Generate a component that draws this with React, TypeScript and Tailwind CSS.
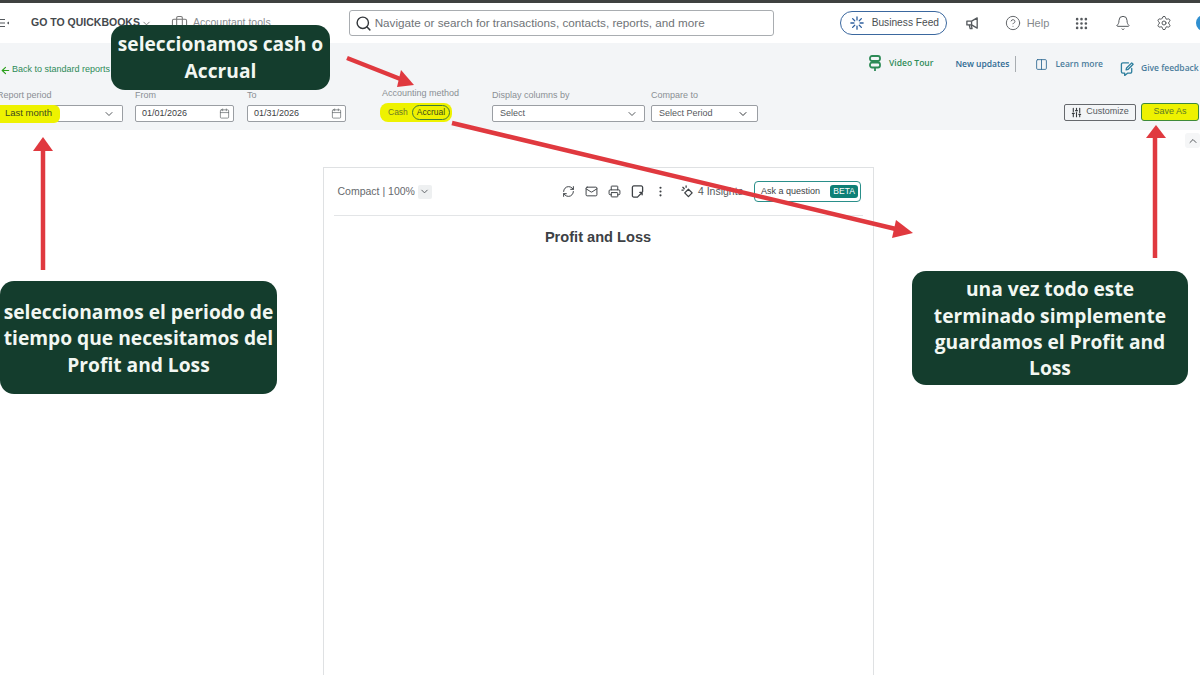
import {
  Bell,
  Briefcase,
  Calendar,
  ChevronDown,
  ChevronUp,
  CircleHelp,
  Columns2,
  Grip,
  Mail,
  MoreVertical,
  Printer,
  RefreshCw,
  Search,
  Settings,
  SlidersVertical,
  ArrowLeft,
} from 'lucide-react'

function FeedIcon() {
  return (
    <svg viewBox="0 0 16 16" className="h-[14px] w-[14px] text-[#2e5f9e]" fill="none" stroke="currentColor" strokeWidth="1.5" strokeLinecap="round">
      <path d="M8 1v3.5M8 11.5V15M1 8h3.5M11.5 8H15M3 3l2.4 2.4M10.6 10.6 13 13M13 3l-2.4 2.4M5.4 10.6 3 13" />
    </svg>
  )
}

function MenuIcon() {
  return (
    <svg viewBox="0 0 10 10" className="h-[10px] w-[10px] text-[#55595d]" fill="none" stroke="currentColor" strokeWidth="1.2">
      <path d="M-1 1.5h6M-1 5h6M-1 8.5h6" />
      <path d="M9 3.4v3.2L6.8 5z" fill="currentColor" stroke="none" />
    </svg>
  )
}

function MegaphoneIcon() {
  return (
    <svg viewBox="0 0 16 16" className="h-[15px] w-[15px] text-[#55595d]" fill="none" stroke="currentColor" strokeWidth="1.4" strokeLinejoin="round">
      <path d="M2 5.5h5L13 2v11L7 9.5H2z" />
      <path d="M7 5.5v4M4.5 9.5l1 4h2l-.8-4" />
    </svg>
  )
}

function SignpostIcon() {
  return (
    <svg viewBox="0 0 14 16" className="h-[16px] w-[14px] text-[#2e8b57]" fill="none" stroke="currentColor" strokeWidth="1.8" strokeLinejoin="round">
      <rect x="2" y="1" width="10" height="5" rx="2" />
      <rect x="2" y="7.5" width="10" height="5" rx="2" />
      <path d="M7 12.5V16" />
    </svg>
  )
}

function FeedbackIcon() {
  return (
    <svg viewBox="0 0 16 16" className="h-[15px] w-[15px] text-[#2e7f9e]" fill="none" stroke="currentColor" strokeWidth="1.4" strokeLinecap="round" strokeLinejoin="round">
      <path d="M9 2H3a1.5 1.5 0 0 0-1.5 1.5v8A1.5 1.5 0 0 0 3 13h2v2.5L8 13h3a1.5 1.5 0 0 0 1.5-1.5V8" />
      <path d="M6.5 9.5 7 7.5 12.5 2l1.5 1.5L8.5 9z" />
    </svg>
  )
}

function ExportIcon() {
  return (
    <svg viewBox="0 0 14 14" className="h-[13px] w-[13px] text-[#3d4145]" fill="none" stroke="currentColor" strokeWidth="1.4" strokeLinecap="round" strokeLinejoin="round">
      <path d="M7 13H3a1.5 1.5 0 0 1-1.5-1.5v-9A1.5 1.5 0 0 1 3 1h8a1.5 1.5 0 0 1 1.5 1.5V7" />
      <path d="M7.5 12.5 12 8M9.5 8H12v2.5" />
    </svg>
  )
}

function InsightIcon() {
  return (
    <svg viewBox="0 0 14 14" className="h-[13px] w-[13px] text-[#3d4145]" fill="none" stroke="currentColor" strokeWidth="1.4" strokeLinejoin="round">
      <path d="M8 4.5 12 8.5 8 12.5 4 8.5z" />
      <path d="M2 2.5 3.5 4M5.5 1v1.5M1 5.5h1.5" strokeLinecap="round" />
    </svg>
  )
}

function Field({ label, children, className, labelClass = '' }: { label: string; children: React.ReactNode; className: string; labelClass?: string }) {
  return (
    <div className={className}>
      <div className={`mb-[4px] whitespace-nowrap text-[9px] leading-[12px] text-[#8a8f94] ${labelClass}`}>{label}</div>
      {children}
    </div>
  )
}

function DateBox({ value }: { value: string }) {
  return (
    <div className="flex h-[17px] items-center justify-between rounded-[2px] border border-[#9a9ea3] bg-white pl-[6px] pr-[3px] text-[9px] text-[#3d4145]">
      <span>{value}</span>
      <Calendar className="h-[11px] w-[11px] text-[#5f6468]" strokeWidth={1.5} />
    </div>
  )
}

function Callout({ className, children }: { className: string; children: React.ReactNode }) {
  return (
    <div className={`absolute flex items-center justify-center rounded-[14px] bg-[#143d2d] text-center font-['Open_Sans',sans-serif] text-[19.2px] font-bold leading-[26.3px] text-[#f2f7f2] ${className}`}>
      <div>{children}</div>
    </div>
  )
}

export default function App() {
  return (
    <div className="relative h-[675px] w-[1200px] overflow-hidden bg-white font-['Liberation_Sans',sans-serif]">
      <div className="h-[3px] bg-[#3f4140]" />

      {/* top nav */}
      <header className="flex h-[40px] items-center text-[#4a4e52] [&>*]:shrink-0">
        <div className="flex w-[31px] items-center"><MenuIcon /></div>
        <span className="w-[107px] whitespace-nowrap text-[10.5px] font-bold text-[#44484c]">GO TO QUICKBOOKS</span>
        <ChevronDown className="ml-[3px] h-[11px] w-[11px] text-[#777]" />
        <Briefcase className="ml-[19px] h-[17px] w-[17px] text-[#777]" strokeWidth={1.5} />
        <span className="ml-[5px] whitespace-nowrap text-[10.5px] text-[#8a8e92]">Accountant tools</span>
        <div className="ml-[78px] flex h-[26px] w-[425px] items-center rounded-[3px] border border-[#a9adb1] pl-[5px]">
          <Search className="h-[17px] w-[17px] text-[#33373b]" strokeWidth={2} />
          <span className="ml-[3px] whitespace-nowrap text-[11.7px] text-[#6f7377]">Navigate or search for transactions, contacts, reports, and more</span>
        </div>
        <div className="ml-[66px] flex h-[24px] w-[107px] items-center rounded-full border-[1.5px] border-[#3b689f] pl-[9px]">
          <FeedIcon />
          <span className="ml-[8px] whitespace-nowrap text-[10.2px] font-medium text-[#4a4e52]">Business Feed</span>
        </div>
        <div className="ml-[18px]"><MegaphoneIcon /></div>
        <CircleHelp className="ml-[25px] h-[16px] w-[16px] text-[#66696d]" strokeWidth={1.5} />
        <span className="ml-[6px] text-[11px] text-[#85898d]">Help</span>
        <Grip className="ml-[25px] h-[15px] w-[15px] text-[#55595d]" strokeWidth={2.2} />
        <Bell className="ml-[26px] h-[16px] w-[16px] text-[#55595d]" strokeWidth={1.5} />
        <Settings className="ml-[25px] h-[16px] w-[16px] text-[#55595d]" strokeWidth={1.5} />
        <div className="ml-[24px] h-[16px] w-[16px] rounded-full bg-[#2f8fd0]" />
      </header>

      {/* report toolbar */}
      <section className="h-[87px] bg-[#f3f5f7]">
        <div className="flex h-[44px]">
          <div className="mt-[21px] flex h-[12px] items-center whitespace-nowrap text-[9px] font-medium text-[#2e8b57]">
            <ArrowLeft className="h-[11px] w-[11px] text-[#2ca01c]" strokeWidth={2.4} />
            <span className="ml-[1px]">Back to standard reports</span>
          </div>
          <div className="ml-auto flex whitespace-nowrap font-['Open_Sans',sans-serif] text-[8.5px] font-semibold">
            <div className="mt-[12px] flex h-[16px] items-center text-[#2e8b57]">
              <SignpostIcon />
              <span className="ml-[7px]">Video Tour</span>
            </div>
            <span className="ml-[22px] mt-[13px] flex h-[16px] items-center border-r border-[#a8adb1] pr-[6px] text-[#2e6a93]">New updates</span>
            <div className="ml-[19px] mt-[13px] flex h-[16px] items-center text-[#4b7d9c]">
              <Columns2 className="h-[13px] w-[13px] text-[#2e6a93]" strokeWidth={1.6} />
              <span className="ml-[7px]">Learn more</span>
            </div>
            <div className="ml-[17px] mt-[17px] flex h-[16px] items-center text-[#4b7d9c]">
              <FeedbackIcon />
              <span className="ml-[6px] w-[59px] overflow-hidden">Give feedback</span>
            </div>
          </div>
        </div>
        <div className="flex items-end">
          <Field label="Report period" labelClass="-ml-[3px]" className="w-[123px]">
            <div className="flex h-[17px] items-center justify-between rounded-r-[2px] border border-l-0 border-[#9a9ea3] bg-white pr-[7px]">
              <span className="flex h-[18px] w-[60px] items-center rounded-r-[6px] bg-[#eef200] pl-[5px] text-[9.5px] font-medium text-[#3d4a20]">Last month</span>
              <ChevronDown className="h-[12px] w-[12px] text-[#55595d]" />
            </div>
          </Field>
          <Field label="From" className="ml-[12px] w-[99px]">
            <DateBox value="01/01/2026" />
          </Field>
          <Field label="To" className="ml-[13px] w-[99px]">
            <DateBox value="01/31/2026" />
          </Field>
          <Field label="Accounting method" className="ml-[36px] w-[110px]">
            <div className="-ml-[2px] flex h-[19px] w-[72px] items-center rounded-[8px] bg-[#eef200] pl-[8px] text-[8.5px] text-[#6d7a28]">
              <span>Cash</span>
              <span className="ml-[4px] rounded-full border border-[#3d7a3a] px-[4px] text-[#3a4a1a]">Accrual</span>
            </div>
          </Field>
          <Field label="Display columns by" className="w-[153px]">
            <div className="flex h-[17px] items-center justify-between rounded-[2px] border border-[#9a9ea3] bg-white pl-[7px] pr-[6px] text-[9px] text-[#55595d]">
              <span>Select</span>
              <ChevronDown className="h-[12px] w-[12px]" />
            </div>
          </Field>
          <Field label="Compare to" className="ml-[6px] w-[107px]">
            <div className="flex h-[17px] items-center justify-between rounded-[2px] border border-[#9a9ea3] bg-white pl-[7px] pr-[8px] text-[9px] text-[#55595d]">
              <span>Select Period</span>
              <ChevronDown className="h-[12px] w-[12px] text-[#33373b]" />
            </div>
          </Field>
          <div className="ml-auto flex items-center gap-[5px] pb-[1px] pr-[1px]">
            <button className="flex h-[17px] w-[72px] items-center justify-center rounded-[2px] border border-[#66696d] text-[9px] text-[#55595d]">
              <SlidersVertical className="mr-[4px] h-[11px] w-[11px] text-[#33373b]" strokeWidth={2.4} />
              Customize
            </button>
            <button className="h-[18px] w-[58px] rounded-[3px] border border-[#3d8a3a] bg-[#eef200] text-[9px] text-[#5c7a28]">Save As</button>
          </div>
        </div>
      </section>

      {/* report area */}
      <main className="relative flex h-[545px] justify-center pt-[37px]">
        <div className="absolute right-0 top-[3px] flex h-[15px] w-[15px] items-center justify-center rounded-[3px] bg-[#f5f6f7]">
          <ChevronUp className="h-[12px] w-[12px] text-[#55595d]" />
        </div>
        <div className="-ml-[4px] w-[551px] border border-b-0 border-[#dfe1e3] px-[10px]">
          <div className="flex h-[48px] items-center border-b border-[#e3e5e7] text-[#55595d]">
            <span className="ml-[4px] whitespace-nowrap text-[10.5px] text-[#66696d]">Compact | 100%</span>
            <span className="ml-[3px] flex h-[14px] w-[14px] items-center justify-center rounded-[2px] bg-[#eef0f1]">
              <ChevronDown className="h-[11px] w-[11px]" />
            </span>
            <RefreshCw className="ml-[130px] h-[13px] w-[13px] text-[#3d4145]" strokeWidth={1.8} />
            <Mail className="ml-[10px] h-[13px] w-[13px] text-[#3d4145]" strokeWidth={1.8} />
            <Printer className="ml-[10px] h-[13px] w-[13px] text-[#3d4145]" strokeWidth={1.8} />
            <div className="ml-[10px]"><ExportIcon /></div>
            <MoreVertical className="ml-[10px] h-[13px] w-[13px] text-[#3d4145]" strokeWidth={2} />
            <div className="ml-[14px]"><InsightIcon /></div>
            <span className="ml-[4px] whitespace-nowrap text-[10.5px] text-[#55595d]">4 Insights</span>
            <div className="ml-[11px] flex h-[21px] w-[107px] items-center justify-between rounded-[4px] border-[1.5px] border-[#2a8f8a] pl-[6px] pr-[2px]">
              <span className="whitespace-nowrap text-[9px] font-medium text-[#3d4145]">Ask a question</span>
              <span className="rounded-[3px] bg-[#0f8076] px-[3px] py-[1px] text-[8.5px] font-medium leading-[11px] text-white">BETA</span>
            </div>
          </div>
          <h1 className="mt-[12px] text-center text-[14.6px] font-bold leading-[18px] text-[#3d4145]">Profit and Loss</h1>
        </div>
      </main>

      {/* annotation arrows */}
      <svg className="pointer-events-none absolute inset-0" width="1200" height="675" viewBox="0 0 1200 675" fill="none">
        <g stroke="#e0393f" strokeWidth="4.5">
          <line x1="347" y1="58" x2="408" y2="82" />
          <line x1="452" y1="123" x2="900" y2="230" />
          <line x1="43" y1="270" x2="43" y2="150" />
          <line x1="1155" y1="258" x2="1155" y2="136" />
        </g>
        <g fill="#e0393f">
          <polygon points="414,85 401,70 397,87" />
          <polygon points="913,233 896,220 892,238" />
          <polygon points="43,137 33,151 53,151" />
          <polygon points="1156,125 1146,138 1166,138" />
        </g>
      </svg>

      <Callout className="left-[111px] top-[25px] h-[65px] w-[219px]">
        seleccionamos cash o<br />Accrual
      </Callout>
      <Callout className="left-0 top-[281px] h-[113px] w-[277px] pt-[2px]">
        seleccionamos el periodo de<br />tiempo que necesitamos del<br />Profit and Loss
      </Callout>
      <Callout className="left-[912px] top-[271px] h-[114px] w-[276px] pt-[2px]">
        una vez todo este<br />terminado simplemente<br />guardamos el Profit and<br />Loss
      </Callout>
    </div>
  )
}
